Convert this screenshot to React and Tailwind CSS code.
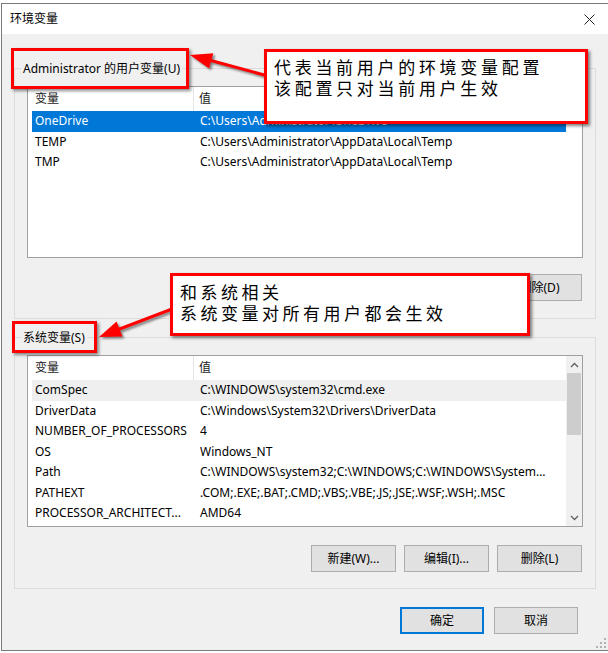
import React from "react";

const UI = { fontFamily: '"Segoe UI","Noto Sans","Noto Sans CJK SC",sans-serif' };
const CJK = { fontFamily: '"Noto Sans CJK SC","Noto Sans",sans-serif' };

function Btn({ children, primary, w = "w-[85px]" }) {
  return (
    <div
      className={
        w +
        " h-[27px] flex items-center justify-center text-[12px] text-black bg-[#e1e1e1] " +
        (primary ? "border-2 border-[#0078d7]" : "border border-[#adadad]")
      }
    >
      {children}
    </div>
  );
}

function Header() {
  return (
    <div className="flex h-[24px] items-center text-[12px] text-[#1a1a1a]">
      <div className="w-[166px] pl-[7px] h-full flex items-center border-r border-[#e5e5e5]">变量</div>
      <div className="pl-[5px]">值</div>
    </div>
  );
}

function Row({ name, value, sel, hover }) {
  return (
    <div
      className={
        "ml-[4px] w-[534px] h-[20.5px] flex items-center text-[12px] whitespace-nowrap overflow-hidden " +
        (sel ? "bg-[#0078d7] text-white" : hover ? "bg-[#efefef] text-black" : "text-black")
      }
    >
      <div className="w-[162px] pl-[3px] overflow-hidden">{name}</div>
      <div className="pl-[6px]">{value}</div>
    </div>
  );
}

function Group({ label, children, h, mt }) {
  return (
    <div className={"border border-[#dcdcdc] px-[12px] " + h + " " + mt}>
      <div className="-mt-[9px] -ml-[6px] px-[2px] w-fit h-[17px] leading-[17px] text-[12px] bg-[#f0f0f0] text-black">
        {label}
      </div>
      {children}
    </div>
  );
}

export default function App() {
  const sys = [
    ["ComSpec", "C:\\WINDOWS\\system32\\cmd.exe"],
    ["DriverData", "C:\\Windows\\System32\\Drivers\\DriverData"],
    ["NUMBER_OF_PROCESSORS", "4"],
    ["OS", "Windows_NT"],
    ["Path", "C:\\WINDOWS\\system32;C:\\WINDOWS;C:\\WINDOWS\\System..."],
    ["PATHEXT", ".COM;.EXE;.BAT;.CMD;.VBS;.VBE;.JS;.JSE;.WSF;.WSH;.MSC"],
    ["PROCESSOR_ARCHITECT...", "AMD64"],
  ];
  return (
    <div className="relative w-[608px] h-[653px] bg-white pt-[3px] pl-[1px] overflow-hidden" style={UI}>
      <div className="h-[648px] border-t border-l border-b border-[#7a7a7a] flex flex-col">
        {/* title bar */}
        <div className="h-[30px] bg-white flex items-center justify-between pl-[8px] pr-[13px]">
          <span className="text-[12px] text-black">环境变量</span>
          <svg width="11" height="11" viewBox="0 0 11 11">
            <path d="M0.5 0.5 L10.5 10.5 M10.5 0.5 L0.5 10.5" stroke="#222" strokeWidth="1" />
          </svg>
        </div>
        {/* body */}
        <div className="relative flex-1 bg-[#f0f0f0] px-[12px] flex flex-col">
          <Group label="Administrator 的用户变量(U)" h="h-[251px]" mt="mt-[34px]">
            <div className="mt-[9px] h-[172px] bg-white border border-[#a0a0a0]">
              <Header />
              <Row name="OneDrive" value="C:\Users\Administrator\OneDrive" sel />
              <Row name="TEMP" value="C:\Users\Administrator\AppData\Local\Temp" />
              <Row name="TMP" value="C:\Users\Administrator\AppData\Local\Temp" />
            </div>
            <div className="mt-[16px] flex justify-end gap-[8px] pr-[1px]">
              <Btn>新建(N)...</Btn>
              <Btn>编辑(E)...</Btn>
              <Btn>删除(D)</Btn>
            </div>
          </Group>

          <Group label="系统变量(S)" h="h-[252px]" mt="mt-[18px]">
            <div className="mt-[9px] h-[172px] bg-white border border-[#a0a0a0] flex">
              <div className="flex-1">
                <Header />
                {sys.map(([n, v], i) => (
                  <Row key={n} name={n} value={v} hover={i === 0} />
                ))}
              </div>
              <div className="w-[17px] bg-[#f0f0f0] flex flex-col items-center">
                <div className="h-[17px] flex items-center justify-center">
                  <svg width="9" height="6" viewBox="0 0 9 6">
                    <path d="M1 5 L4.5 1.5 L8 5" stroke="#606060" strokeWidth="1.3" fill="none" />
                  </svg>
                </div>
                <div className="w-[14px] h-[62px] bg-[#cdcdcd]" />
                <div className="flex-1" />
                <div className="h-[17px] flex items-center justify-center">
                  <svg width="9" height="6" viewBox="0 0 9 6">
                    <path d="M1 1 L4.5 4.5 L8 1" stroke="#606060" strokeWidth="1.3" fill="none" />
                  </svg>
                </div>
              </div>
            </div>
            <div className="mt-[18px] flex justify-end gap-[8px] pr-[1px]">
              <Btn>新建(W)...</Btn>
              <Btn>编辑(I)...</Btn>
              <Btn>删除(L)</Btn>
            </div>
          </Group>

          <div className="mt-[18px] flex justify-end gap-[10px] pr-[18px]">
            <Btn primary w="w-[84px]">确定</Btn>
            <Btn w="w-[84px]">取消</Btn>
          </div>

          <svg className="absolute right-[2px] bottom-[2px]" width="10" height="10" viewBox="0 0 10 10">
            <g fill="#b0b0b0">
              <rect x="8" y="0" width="2" height="2" />
              <rect x="4" y="4" width="2" height="2" />
              <rect x="8" y="4" width="2" height="2" />
              <rect x="0" y="8" width="2" height="2" />
              <rect x="4" y="8" width="2" height="2" />
              <rect x="8" y="8" width="2" height="2" />
            </g>
          </svg>
        </div>
      </div>

      {/* annotations */}
      <div className="absolute left-[11px] top-[48px] w-[178px] h-[41px] border-[3px] border-[#ff0000] shadow-[2px_2px_3px_rgba(0,0,0,0.45)]" />
      <div className="absolute left-[12px] top-[321px] w-[85px] h-[32px] border-[3px] border-[#ff0000] shadow-[2px_2px_3px_rgba(0,0,0,0.45)]" />

      <svg className="absolute left-0 top-0 drop-shadow-[2px_2px_1px_rgba(0,0,0,0.45)]" width="608" height="653" viewBox="0 0 608 653">
        <line x1="268" y1="76" x2="209" y2="60" stroke="#ff0000" strokeWidth="3" />
        <polygon points="190,55 213.3,53.2 209.1,68.6" fill="#ff0000" />
        <line x1="172" y1="309" x2="117" y2="330" stroke="#ff0000" strokeWidth="3" />
        <polygon points="99,337 122.4,336.6 116.6,321.6" fill="#ff0000" />
      </svg>

      <div
        className="absolute left-[264px] top-[49px] w-[324px] h-[75px] bg-white border-[3px] border-[#ff0000] shadow-[2px_2px_3px_rgba(0,0,0,0.5)] pl-[7px] pt-[4px] text-[17px] leading-[21px] tracking-[3.7px] text-black"
        style={CJK}
      >
        <div>代表当前用户的环境变量配置</div>
        <div>该配置只对当前用户生效</div>
      </div>
      <div
        className="absolute left-[170px] top-[273px] w-[360px] h-[63px] bg-white border-[3px] border-[#ff0000] shadow-[2px_2px_3px_rgba(0,0,0,0.5)] pl-[7px] pt-[5px] text-[17px] leading-[21px] tracking-[3.5px] text-black"
        style={CJK}
      >
        <div>和系统相关</div>
        <div>系统变量对所有用户都会生效</div>
      </div>
    </div>
  );
}
